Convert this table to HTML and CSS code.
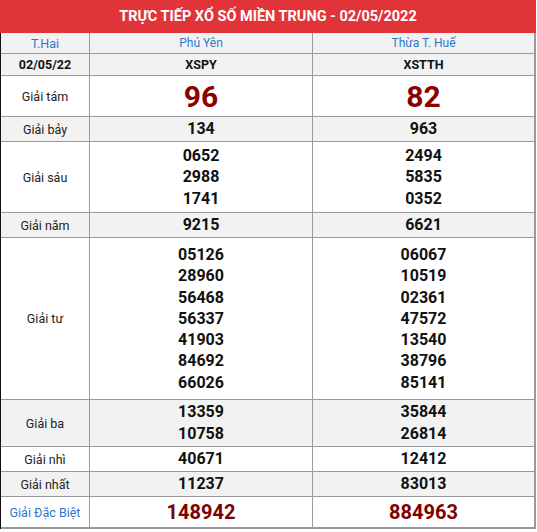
FILE: index.html
```html
<!DOCTYPE html>
<html lang="vi">
<head>
<meta charset="utf-8">
<link rel="stylesheet" href="styles.css">
</head>
<body>
<div class="board">
  <div class="title">TRỰC TIẾP XỔ SỐ MIỀN TRUNG - 02/05/2022</div>
  <div class="grid">
    <div class="c lab blue gray h-head">T.Hai</div>
    <div class="c blue gray h-head">Phú Yên</div>
    <div class="c blue gray h-head last">Thừa T. Huế</div>

    <div class="c bold gray h-date">02/05/22</div>
    <div class="c bold gray h-date">XSPY</div>
    <div class="c bold gray h-date last">XSTTH</div>

    <div class="c lab h-tam">Giải tám</div>
    <div class="c big h-tam">96</div>
    <div class="c big h-tam last">82</div>

    <div class="c lab gray h-bay">Giải bảy</div>
    <div class="c num gray h-bay">134</div>
    <div class="c num gray h-bay last">963</div>

    <div class="c lab h-sau">Giải sáu</div>
    <div class="c num h-sau"><span>0652</span><span>2988</span><span>1741</span></div>
    <div class="c num h-sau last"><span>2494</span><span>5835</span><span>0352</span></div>

    <div class="c lab gray h-nam">Giải năm</div>
    <div class="c num gray h-nam">9215</div>
    <div class="c num gray h-nam last">6621</div>

    <div class="c lab h-tu">Giải tư</div>
    <div class="c num h-tu"><span>05126</span><span>28960</span><span>56468</span><span>56337</span><span>41903</span><span>84692</span><span>66026</span></div>
    <div class="c num h-tu last"><span>06067</span><span>10519</span><span>02361</span><span>47572</span><span>13540</span><span>38796</span><span>85141</span></div>

    <div class="c lab gray h-ba">Giải ba</div>
    <div class="c num gray h-ba wide"><span>13359</span><span>10758</span></div>
    <div class="c num gray h-ba wide last"><span>35844</span><span>26814</span></div>

    <div class="c lab h-nhi">Giải nhì</div>
    <div class="c num h-nhi">40671</div>
    <div class="c num h-nhi last">12412</div>

    <div class="c lab gray h-nhat">Giải nhất</div>
    <div class="c num gray h-nhat">11237</div>
    <div class="c num gray h-nhat last">83013</div>

    <div class="c lab blue h-db">Giải Đặc Biệt</div>
    <div class="c db h-db">148942</div>
    <div class="c db h-db last">884963</div>
  </div>
</div>
</body>
</html>
```

FILE: styles.css
```css
html, body {
  margin: 0;
  padding: 0;
  background: #fff;
}
body {
  font-family: Roboto, "Liberation Sans", Arial, sans-serif;
  color: #111;
}
.board {
  width: 536px;
}
.title {
  height: 33px;
  background: #e13438;
  color: #fff;
  font-weight: 700;
  font-size: 14.5px;
  display: flex;
  align-items: center;
  justify-content: center;
  box-sizing: border-box;
  padding-bottom: 1px;
}
.grid {
  display: grid;
  grid-template-columns: 89px 223px 223px;
  border-left: 1px solid #111;
}
.c {
  box-sizing: border-box;
  border-right: 1px solid #9a9a9a;
  border-bottom: 1px solid #9a9a9a;
  display: flex;
  flex-direction: column;
  align-items: center;
  justify-content: center;
  text-align: center;
  font-size: 12px;
  background: #fff;
}
.c.lab {
  font-size: 12.5px;
  color: #222;
}
.gray { background: #f2f2f2; }
.blue { color: #2f77cc !important; }
.bold { font-weight: 700; font-size: 12.5px; }
.num {
  font-weight: 700;
  font-size: 16px;
  line-height: 21.2px;
  color: #111;
}
.num.wide { line-height: 21.7px; }
.num span { display: block; }
.big {
  font-weight: 700;
  font-size: 30px;
  color: #8b0000;
}
.db {
  font-weight: 700;
  font-size: 20px;
  color: #800000;
}
.last { border-right: 2px solid #9a9a9a; }
.h-head { height: 21px; }
.h-date { height: 22px; }
.h-tam { height: 41px; }
.h-bay { height: 25px; }
.h-sau { height: 71px; }
.h-nam { height: 25px; }
.h-tu { height: 162px; }
.h-ba { height: 47px; }
.h-nhi { height: 25px; }
.h-nhat { height: 25px; }
.h-db { height: 32px; border-bottom-width: 2px; }
```
